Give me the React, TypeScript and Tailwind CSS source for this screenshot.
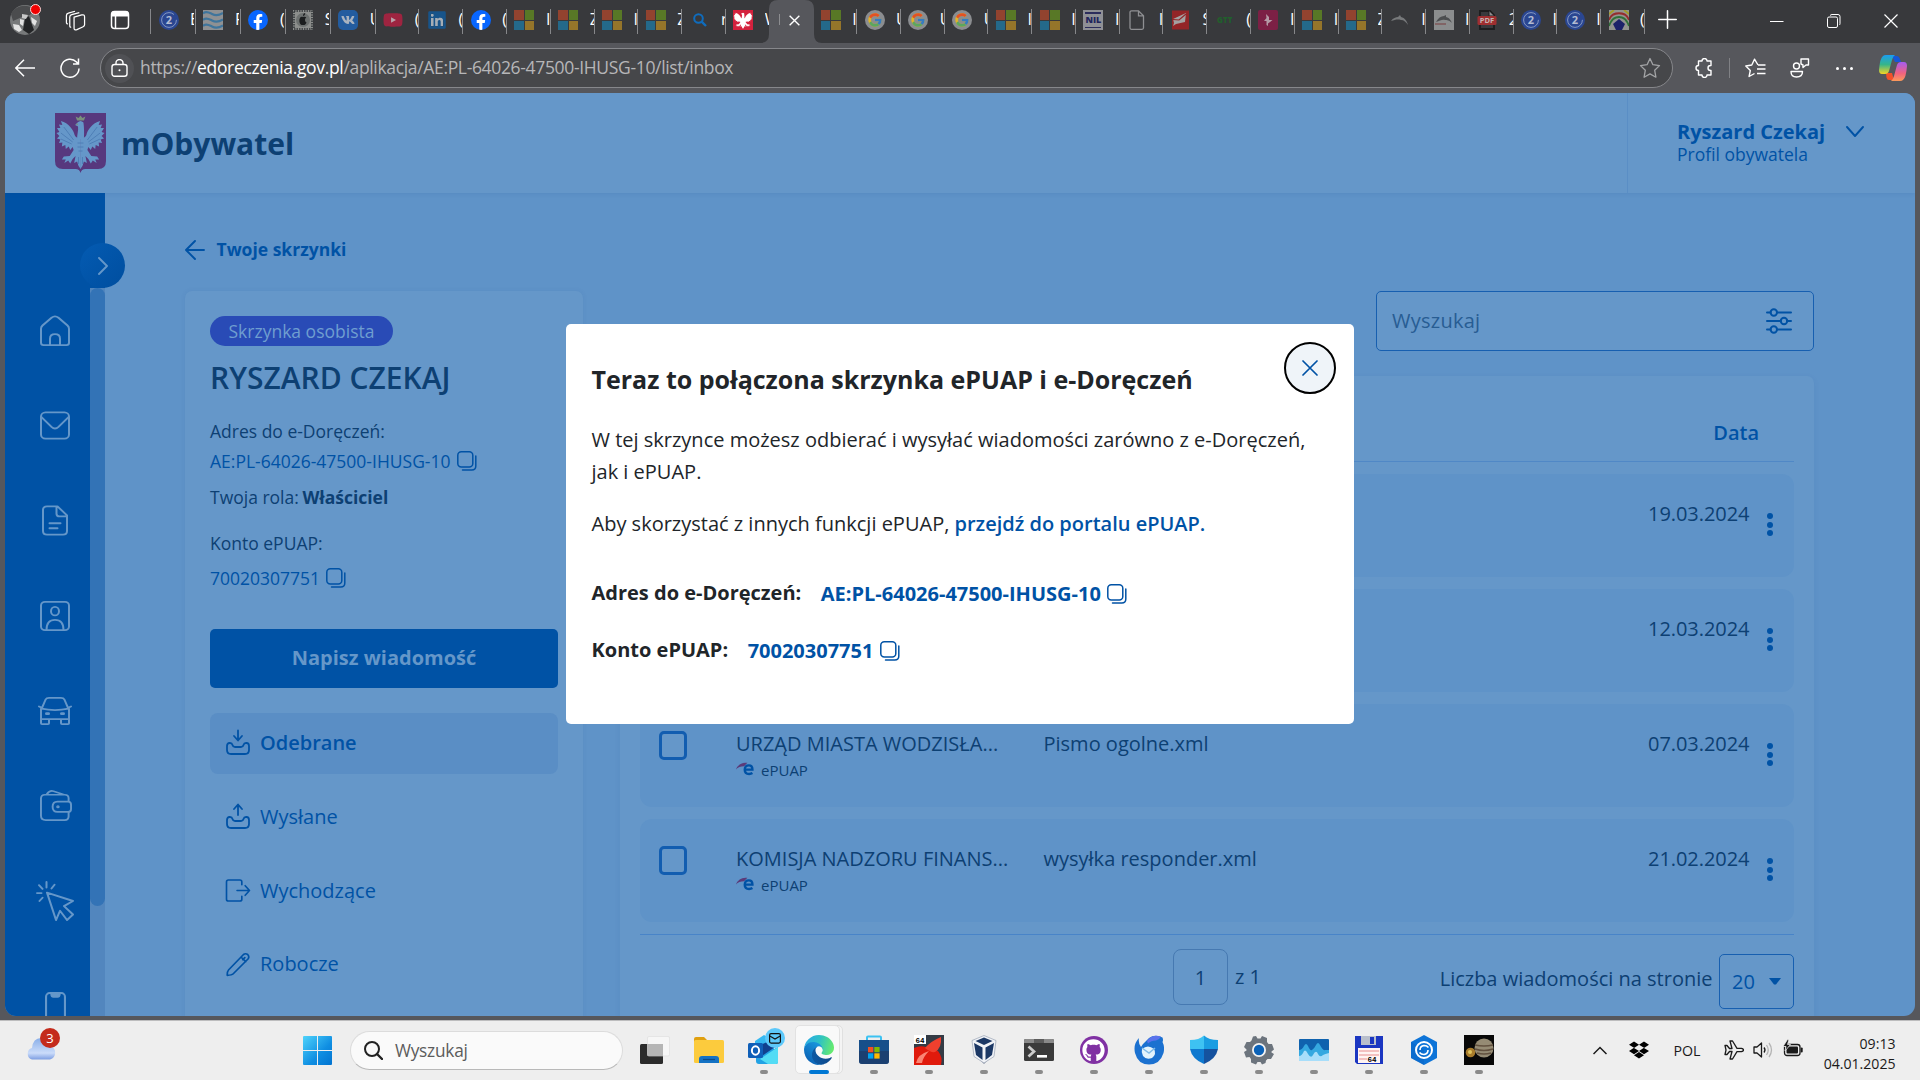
import React from "react";
import type { ReactNode } from "react";
import { FaVk, FaYoutube, FaLinkedin, FaGithub, FaDropbox, FaFacebookF } from "react-icons/fa";
import { FcGoogle } from "react-icons/fc";

/* ---------- favicons ---------- */

const MsLogo = () => (
  <div className="grid h-5 w-5 grid-cols-2 gap-[1px]">
    <div className="bg-[#92432f]" />
    <div className="bg-[#587826]" />
    <div className="bg-[#24698a]" />
    <div className="bg-[#95752a]" />
  </div>
);

const TwoCircle = () => (
  <svg viewBox="0 0 20 20" className="h-5 w-5">
    <circle cx="10" cy="10" r="10" fill="#2a4691" />
    <circle cx="10" cy="10" r="7.4" fill="none" stroke="#8fa0c8" strokeWidth="0.9" strokeDasharray="40 6" />
    <text x="10" y="14" textAnchor="middle" fontSize="11" fontWeight="700" fill="#b4bcd2" fontFamily="Open Sans, sans-serif">2</text>
  </svg>
);

const Facebook = () => (
  <div className="flex h-5 w-5 items-end justify-center overflow-hidden rounded-full bg-[#0866ff]">
    <FaFacebookF className="h-4 w-4 text-white" />
  </div>
);

const wing = "M26.200 22C25 25 22 26 20 22 19 17 14 10 6 8l1.500 4L4 11.500 5.500 15 2 15l2.500 4L1.500 20 4.500 23 2 25.500l3.500 1L4 30l3.500-.500L7 33.500l3.500-1.500.500 4 3-2.500L15.500 37l2.500-3 1 3-4 6-6 .500L7 46.500h4L9.500 50l4-2.500 2 3L18 46l3-3-1.500 7 3-1.500L24 53l2.200 3z";

const Eagle = ({ fill }: { fill: string }) => (
  <g fill={fill}>
    <path d={wing} />
    <path d={wing} transform="translate(52 0) scale(-1 1)" />
    <path d="M22.500 26c0-5 1.500-8 1-12.500L20.500 12l2.500-2.500q3-3 6 0Q30 16 29.500 26z" />
  </g>
);

const favicons: Record<string, ReactNode> = {
  ms: <MsLogo />,
  two: <TwoCircle />,
  fb: <Facebook />,
  waves: (
    <svg viewBox="0 0 20 20" className="h-5 w-5">
      <rect width="20" height="20" fill="#8f9193" />
      {[3.5, 10, 16].map((y) => (
        <path key={y} d={`M0 ${y}c3-3 6-1 9 .5s6 2 11-1`} fill="none" stroke="#3f759c" strokeWidth="2.200" />
      ))}
    </svg>
  ),
  apple: (
    <svg viewBox="0 0 20 20" className="h-5 w-5">
      <rect width="20" height="20" fill="#8c8e8c" />
      <rect x="1" y="1" width="18" height="18" fill="none" stroke="#33373a" strokeWidth="1.600" strokeDasharray="1.500 1" />
      <circle cx="10" cy="10" r="7" fill="#6d7170" />
      <path d="M10 7c-4-2-5 6-1.500 8h3c1-.500 2-2 2-2.500-2-1-2-4-.200-5-1-1-2-1-3.300-.500zM10 6c0-2 1-3 2.200-3 0 2-1 3-2.200 3z" fill="#1b1d1e" />
    </svg>
  ),
  vk: (
    <div className="flex h-5 w-5 items-center justify-center rounded-[5px] bg-[#235c9f]">
      <FaVk className="h-3.5 w-3.5 text-[#a9b3c0]" />
    </div>
  ),
  yt: (
    <div className="relative flex h-5 w-5 items-center justify-center">
      <div className="absolute h-2 w-2 bg-[#b9a3aa]" />
      <FaYoutube className="relative h-5 w-5 text-[#9e2440]" />
    </div>
  ),
  li: (
    <div className="relative flex h-5 w-5 items-center justify-center">
      <div className="absolute h-3 w-3 bg-[#a5adb5]" />
      <FaLinkedin className="relative h-5 w-5 text-[#17548a]" />
    </div>
  ),
  search: (
    <svg viewBox="0 0 20 20" className="h-5 w-5" fill="none" stroke="#0f6cbd" strokeWidth="2">
      <circle cx="8.500" cy="8.500" r="4.300" />
      <path d="M11.600 11.600l4.400 4.400" strokeWidth="2.400" />
    </svg>
  ),
  pl: (
    <svg viewBox="0 0 52 60" className="h-5 w-5" preserveAspectRatio="none">
      <rect width="52" height="60" fill="#d4213d" />
      <Eagle fill="#fff" />
    </svg>
  ),
  google: (
    <div className="flex h-5 w-5 items-center justify-center rounded-full bg-[#8b8d90]">
      <FcGoogle className="h-[16px] w-[16px] opacity-75" />
    </div>
  ),
  nil: (
    <div className="flex h-5 w-5 flex-col items-center justify-between bg-[#8f9095] py-[2px]">
      <div className="h-[1.5px] w-4 bg-[#2c2d5c]" />
      <div className="text-[9px] leading-[10px] font-extrabold text-[#22245c]">NIL</div>
      <div className="h-[1.5px] w-4 bg-[#2c2d5c]" />
    </div>
  ),
  file: (
    <svg viewBox="0 0 20 20" className="h-5 w-5" fill="none" stroke="#8e8f92" strokeWidth="1.300">
      <path d="M4.500.800h7l5 5v12a1.500 1.500 0 0 1-1.500 1.500H4.500A1.500 1.500 0 0 1 3 17.800V2.300A1.500 1.500 0 0 1 4.500.800zM11.500.800v5h5" />
    </svg>
  ),
  mail: (
    <svg viewBox="0 0 20 20" className="h-5 w-5">
      <path d="M1 .5h17V19.500H1z" fill="#932527" />
      <path d="M2 9L15 3l-1 9-9 2-3 2 1-3z" fill="#a3a1a1" />
      <path d="M2 9.500l6 .5 7-6" stroke="#932527" strokeWidth="1.200" fill="none" />
    </svg>
  ),
  gtt: <div className="w-5 text-center text-[8px] leading-5 font-extrabold text-[#215f2c]">GTT</div>,
  pink: (
    <svg viewBox="0 0 20 20" className="h-5 w-5">
      <rect width="20" height="20" rx="2" fill="#7c2045" />
      <path d="M8 4l3 3v3h3.500L10 13.500V16l-1.500-1v-4H6L8.500 8z" fill="#b59aa6" />
    </svg>
  ),
  dolphin: (
    <svg viewBox="0 0 20 20" className="h-5 w-5">
      <path d="M1 11c2-3 5-4 7-4l2-2 1 2c4 1 6 4 7 8-2-3-4-5-7-5-4-1-6 0-10 1z" fill="#77797b" />
    </svg>
  ),
  dolphin2: (
    <svg viewBox="0 0 20 20" className="h-5 w-5">
      <rect width="20" height="20" fill="#8b8d8e" />
      <path d="M2 12c2-4 5-6 8-6l2-1v2c4 1 5 4 6 6-3-3-5-3-7-3-3-1-5 1-9 2z" fill="#4c4e50" />
      <path d="M1 14h11" stroke="#7c4a4a" strokeWidth="1.200" />
    </svg>
  ),
  pdf: (
    <svg viewBox="0 0 20 20" className="h-5 w-5">
      <path d="M3 1h10l4 4v14H3z" fill="none" stroke="#1c1d1e" strokeWidth="1.800" />
      <path d="M12 1v5h5" fill="#8d8e90" stroke="#1c1d1e" />
      <rect x="0.500" y="6" width="19" height="9" rx="1.500" fill="#9f2f30" />
      <text x="10" y="13.200" textAnchor="middle" fontSize="7.500" fontWeight="700" fill="#c4b3b3" fontFamily="Open Sans, sans-serif">PDF</text>
    </svg>
  ),
  rainbow: (
    <svg viewBox="0 0 20 20" className="h-5 w-5" fill="none" strokeWidth="1.800">
      <rect width="20" height="20" fill="#92948f" />
      <path d="M0 4l5-4M15 0l5 4" stroke="#a39b28" />
      <path d="M0 10C3 1 17 1 20 10" stroke="#962d2d" />
      <path d="M0 16C4 4 16 4 20 16" stroke="#2f7038" />
      <path d="M4 14l6-5 6 5-3 6H7z" fill="#1c2269" />
    </svg>
  ),
};

const tabs: [string, string][] = [
  ["two", "E"], ["waves", "F"], ["fb", "("], ["apple", "S"], ["vk", "U"],
  ["yt", "("], ["li", "("], ["fb", "("], ["ms", "I"], ["ms", "Z"], ["ms", "I"], ["ms", "Z"], ["search", "r"], ["pl", "W"],
  ["active", ""],
  ["ms", "I"], ["google", "U"], ["google", "U"], ["google", "U"], ["ms", "I"], ["ms", "I"], ["nil", "I"], ["file", "I"],
  ["mail", "S"], ["gtt", "("], ["pink", "I"], ["ms", "I"], ["ms", "Z"], ["dolphin", "I"], ["dolphin2", "I"], ["pdf", "2"],
  ["two", "I"], ["two", "I"], ["rainbow", "("],
];

const Line = ({ d, className, w = 1.5 }: { d: string; className: string; w?: number }) => (
  <svg viewBox="0 0 24 24" className={className} fill="none" stroke="currentColor" strokeWidth={w} strokeLinecap="round" strokeLinejoin="round">
    <path d={d} />
  </svg>
);

function TabStrip() {
  return (
    <div className="flex h-[43px] shrink-0 bg-[#38393c] text-white">
      <div className="flex w-[150px] shrink-0 items-start pt-[5px] pl-[10px]">
        <div className="relative h-[30px] w-[30px] shrink-0">
          <svg viewBox="0 0 30 30" className="h-[30px] w-[30px]">
            <circle cx="15" cy="15" r="15" fill="#77797a" />
            <path d="M1 9c4-8 15-11 23-5l-4 6-8 2-9 4z" fill="#4b4c4e" />
            <path d="M15 14l4-3 2 6 3 8-5 4-6-4z" fill="#232426" />
            <path d="M3 19l6 1 3 5-3 2-5-3zM21 12l6 4-2 5-3-3zM10 14l4 1-1 6-3-2z" fill="#e2e2e2" />
            <path d="M12 9l6 1-2 4-4-1z" fill="#c9c9c9" />
          </svg>
          <div className="absolute -top-[1px] right-[-1px] h-[11px] w-[11px] rounded-full border border-[#fbdada] bg-[#f00000]" />
        </div>
        <svg viewBox="0 0 22 22" className="mt-[5px] ml-[25px] h-[21px] w-[21px] shrink-0" fill="none" stroke="#fff" strokeWidth="1.300">
          <path d="M9.500 7.500l8-2.300q3-.700 3 2v8.300q0 1.500-1.500 2l-6.500 3q-3 1-3-1.500z" />
          <path d="M6.500 17.500q-1.500.300-1.500-1.500V6.800q0-2 2-2.500l8-2M3 14q-1.500 0-1.500-1.500V5.300q0-2 2-2.500l7-2" transform="translate(0 .5)" />
        </svg>
        <svg viewBox="0 0 20 20" className="mt-[5px] ml-[24px] h-[20px] w-[20px] shrink-0" fill="none" stroke="#fff" strokeWidth="1.500">
          <rect x="1.500" y="1.500" width="17" height="17" rx="3" />
          <path d="M2 4h16" strokeWidth="5" />
          <path d="M5.500 6v12" />
        </svg>
      </div>
      {tabs.map(([icon, letter], i) =>
        icon === "active" ? (
          <div key={i} className="relative flex w-[43.750px] shrink-0 justify-center">
            <svg viewBox="0 0 62 43" className="absolute top-0 -left-[9px] h-[43px] w-[62px]">
              <path d="M0 43q9 0 9-9V9q0-9 9-9h27q9 0 9 9v25q0 9 8 9z" fill="#56575c" />
            </svg>
            <div className="relative mt-[14px] mr-[9px] h-[11px] w-px bg-[#8c8d90]" />
            <svg viewBox="0 0 12 12" className="relative mt-[15px] mr-[1px] h-[11px] w-[11px]" stroke="#fff" strokeWidth="1.500">
              <path d="M.7.700l10.600 10.600M11.300.700L.7 11.300" />
            </svg>
          </div>
        ) : (
          <div key={i} className={`flex shrink-0 items-start overflow-hidden pt-[9px] ${i < 5 ? "w-[44.950px]" : "w-[43.780px]"}`}>
            <div className={`h-[25px] w-px shrink-0 ${i === 15 ? "bg-transparent" : "bg-[#86878a]"}`} />
            <div className="mt-[1px] ml-[7.500px] h-5 w-5 shrink-0">{favicons[icon]}</div>
            <div className="ml-[11.500px] w-[3.750px] shrink-0 overflow-hidden text-[16px] leading-[20px]">{letter}</div>
          </div>
        ),
      )}
      <div className="flex flex-1 items-start">
        <div className="mt-[9px] h-[25px] w-px bg-[#86878a]" />
        <Line d="M12 2v20M2 12h20" className="mt-[9px] ml-[12px] h-[21px] w-[21px]" w={1.7} />
        <svg viewBox="0 0 14 14" className="mt-[15px] ml-[92px] h-[14px] w-[14px]" stroke="#fff"><path d="M0 6.500h13.500" /></svg>
        <svg viewBox="0 0 14 14" className="mt-[14px] ml-[43px] h-[14px] w-[14px]" stroke="#fff" fill="none">
          <rect x=".5" y="3" width="10" height="10.500" rx="1.500" />
          <path d="M3 1.500q1-1 2-1h6q2 0 2 2v7q0 1-.7 1.500" />
        </svg>
        <svg viewBox="0 0 14 14" className="mt-[14px] ml-[43px] h-[14px] w-[14px]" stroke="#fff" strokeWidth="1.200"><path d="M.5.500l13 13M13.500.500l-13 13" /></svg>
      </div>
    </div>
  );
}

const starPath = "M12 2.500l2.900 6.200 6.600.900-4.800 4.700 1.200 6.900L12 17.900l-5.900 3.300 1.200-6.900L2.500 9.600l6.600-.900z";

function Toolbar() {
  return (
    <div className="flex h-[50px] shrink-0 items-center bg-[#56575c] text-white">
      <svg viewBox="0 0 20 18" className="ml-[15px] h-[18px] w-[20px]" fill="none" stroke="#fff" strokeWidth="1.500"><path d="M20 9H1M9 .800L.8 9 9 17.200" /></svg>
      <svg viewBox="0 0 20 20" className="ml-[25px] h-[20px] w-[20px]" fill="none" stroke="#fff" strokeWidth="1.500"><path d="M19 10.500A9 9 0 1 1 16.500 4l1.500 1.800M18.500.500V6H13" /></svg>
      <div className="ml-[20px] flex h-[40px] w-[1573px] items-center rounded-full border border-[#86878b] bg-[#46474a]">
        <div className="ml-[4px] flex h-[29px] w-[29px] items-center justify-center rounded-full bg-[#505155]">
          <svg viewBox="0 0 17 18" className="h-[18px] w-[17px]" fill="none" stroke="#fff" strokeWidth="1.400">
            <rect x="1" y="5.500" width="15" height="11.700" rx="2.500" />
            <path d="M5 5.500V4a3.500 3.500 0 0 1 7 0v1.500" />
            <circle cx="8.500" cy="11.300" r="1" fill="#fff" stroke="none" />
          </svg>
        </div>
        <div className="-mt-[2px] ml-[6px] text-[17.500px] tracking-[-0.335px] whitespace-nowrap text-[#b6b6b8]">
          https://<span className="text-white">edoreczenia.gov.pl</span>/aplikacja/AE:PL-64026-47500-IHUSG-10/list/inbox
        </div>
        <div className="flex-1" />
        <Line d={starPath} className="mr-[10px] h-[24px] w-[24px] text-[#a3a4a6]" w={1.3} />
      </div>
      <svg viewBox="0 0 20 20" className="ml-[21px] h-[20px] w-[20px]" fill="none" stroke="#fff" strokeWidth="1.400" strokeLinejoin="round">
        <path d="M4.500 3H8a2.500 2.500 0 0 1 5 0h4v4.500h-.5a2.500 2.500 0 0 0 0 5h.5V17h-4a2.500 2.500 0 0 1-5 0H4.500v-4.500a2.500 2.500 0 0 1 0-5z" />
      </svg>
      <div className="ml-[15px] h-[20px] w-px bg-[#808185]" />
      <svg viewBox="0 0 21 20" className="ml-[15px] h-[20px] w-[21px]" fill="none" stroke="#fff" strokeWidth="1.400" strokeLinejoin="round">
        <path d="M13 7L9.500 1.200 6.800 7 .8 8l4.500 4.500-1.200 6L9.500 15.500M13 7h7.500M12 11h8.500M12 15.500h8.500" />
      </svg>
      <svg viewBox="0 0 20 20" className="ml-[24px] h-[20px] w-[20px]" fill="none" stroke="#fff" strokeWidth="1.400" strokeLinejoin="round">
        <circle cx="6.500" cy="8" r="3" />
        <path d="M1 13.500h11.500c0 3.500-2 5.500-6 5.500S1 17 1 13.500zM11 1h7.500v6H16l-3 2.500V7l-2-1z" />
      </svg>
      <div className="ml-[26px] flex gap-[4px]">
        {[0, 1, 2].map((i) => <div key={i} className="h-[3px] w-[3px] rounded-full bg-white" />)}
      </div>
      <svg viewBox="0 0 28 26" className="ml-[26px] h-[26px] w-[28px]">
        <defs>
          <linearGradient id="cpA" x1="0" y1="0" x2="0" y2="1"><stop offset="0" stopColor="#1b9df0" /><stop offset=".5" stopColor="#35b58a" /><stop offset="1" stopColor="#f5d524" /></linearGradient>
          <linearGradient id="cpB" x1="0" y1="0" x2="0" y2="1"><stop offset="0" stopColor="#a45cf2" /><stop offset=".6" stopColor="#f2637e" /><stop offset="1" stopColor="#fb9a5a" /></linearGradient>
        </defs>
        <path d="M13 1h5q2 0 2.700 2.500L22 7h-6z" fill="#1657d8" />
        <path d="M15 25h-5q-2 0-2.500-2.500L7 18h6z" fill="#f2512a" />
        <path d="M7 0h9q-2 1-3 5l-3 11q-1 3-4 3H3q-3 0-3-4Q1 3 4 1 5 0 7 0z" fill="url(#cpA)" />
        <path d="M21 26h-9q2-1 3-5l3-11q1-3 4-3h3q3 0 3 4-1 12-4 14-1 1-3 1z" fill="url(#cpB)" />
      </svg>
    </div>
  );
}

/* ---------- page ---------- */

const CopyIcon = () => (
  <svg viewBox="0 0 20 20" className="h-5 w-5" fill="none" stroke="#0052a5" strokeWidth="1.500" strokeLinecap="round">
    <rect x=".8" y=".8" width="15" height="15.200" rx="3.500" />
    <path d="M18.800 5v10q0 4-4 4H5.500" />
  </svg>
);

function Header() {
  return (
    <div className="relative z-10 flex h-[100px] shrink-0 bg-[#6597c9] shadow-[0_1px_4px_rgba(0,60,130,0.1)]">
      <svg viewBox="0 0 52 60" className="mt-[20px] ml-[50px] h-[60px] w-[51px]" preserveAspectRatio="none">
        <path d="M0 0h52v48q0 8-8 8H31q-4 0-5 4-1-4-5-4H8q-8 0-8-8z" fill="#57387e" />
        <Eagle fill="#6597c9" />
        <path d="M22.500 7.500l-1.500-4 3 1.500L26 2.500l2 2.500 3-1.500-1.500 4zM21 11l2.500-.5-.5 2z" fill="#7a8f7c" />
        <path d="M9 14l10 13M6 20l12 9M6 26l11 5M43 14L33 27M46 20l-12 9M46 26l-11 5M23 30l6 0M23 34l6 0M24 38l4 0M24 44v7M28 44v7" stroke="#4b7cb4" strokeWidth=".9" fill="none" />
      </svg>
      <div className="mt-[30px] ml-[15px] text-[30px] leading-[41px] font-bold text-[#0d4073]">mObywatel</div>
      <div className="flex-1" />
      <div className="flex w-[288px] border-l border-[#5a8ec5] pt-[25px] pl-[49px] text-[#0052a5]">
        <div className="w-[149px] whitespace-nowrap">
          <div className="text-[20px] leading-[27px] font-bold">Ryszard Czekaj</div>
          <div className="-mt-[1px] text-[17.500px] leading-[21px]">Profil obywatela</div>
        </div>
        <svg viewBox="0 0 18 11" className="mt-[8px] ml-[20px] h-[11px] w-[18px]" fill="none" stroke="currentColor" strokeWidth="1.900" strokeLinecap="round" strokeLinejoin="round"><path d="M1 1l8 9 8-9" /></svg>
      </div>
    </div>
  );
}

const sideIcons: { box: string; cls: string; body: ReactNode }[] = [
  { box: "0 0 30 34", cls: "h-[31px] w-[30px]", body: <path d="M1 15Q1 13 2.500 11.500L11.500 3q3.500-3 7 0L27.500 11.500Q29 13 29 15v15.500q0 2.500-2.500 2.500H3.500Q1 33 1 30.500zM10 33v-7q0-5 5-5t5 5v7" /> },
  { box: "0 0 30 31", cls: "h-[29px] w-[30px]", body: <><rect x="1" y="1.500" width="28" height="28" rx="4.500" /><path d="M1.500 6.500l10 10.500q3.500 3.500 7 0l10-10.500" /></> },
  { box: "0 0 26 34", cls: "h-[31px] w-[26px]", body: <path d="M5 1.500h10.500l9.500 10V28.500q0 4-4 4H5q-4 0-4-4v-23q0-4 4-4zM14.500 2v7.500q0 3 3 3H25M7.500 20h11M7.500 25.500h8" /> },
  { box: "0 0 30 34", cls: "h-[30px] w-[30px]", body: <><rect x="1" y="1" width="28" height="32" rx="4" /><ellipse cx="15" cy="11.500" rx="4" ry="4.800" /><path d="M6.500 33q0-11.500 8.500-11.500t8.500 11.500" /></> },
  { box: "0 0 34 31", cls: "h-[28px] w-[34px]", body: <><path d="M4 12l3.500-9Q8.500 1 11 1h12q2.500 0 3.500 2l3.500 9M3 13v16q0 1 1 1h6q1 0 1-1v-4M31 13v16q0 1-1 1h-6q-1 0-1-1v-4M3 24.500h28M3.500 13q13.500 3 27 0M1 10.500l3 1.500M33 10.500L30 12" /><path d="M8.500 18.500h2M23.500 18.500h2" strokeWidth="3" /></> },
  { box: "0 0 33 36", cls: "ml-[2px] h-[31px] w-[32px]", body: <><path d="M29.500 13.500V9.500q0-4-4-4H5q-4 0-4 4.500v20q0 5 5 5h19.500q4 0 4-4.500v-4M7 5Q10 0 14 1.500L25 5.500M18 13.500h11q3 0 3 3.500v5q0 3.500-3 3.500H18q-5 0-5-6T18 13.500z" /><circle cx="18.500" cy="19.500" r=".8" /></> },
  { box: "0 0 38 43", cls: "h-[40px] w-[38px]", body: <path d="M11 12.500l26 9-9 5.500 9 9-6 6-7-10-4 10zM10.500 1v6M18.500 4L15.500 8M3 4.500l3.500 4M1 13h4.500M3.500 21.500l3-3.500" /> },
  { box: "0 0 20 36", cls: "mt-[30px] h-[38px] w-[21px]", body: <><rect x="1" y="1" width="18" height="34" rx="3.500" /><path d="M6 1.500q0 3 2 3h4q2 0 2-3" fill="#6597c9" /><path d="M9 26.500h2" /></> },
];

function Sidebar() {
  return (
    <div className="relative flex w-[100px] shrink-0 bg-[#0052a5]">
      <div className="flex h-[823px] w-[85px] flex-col overflow-hidden pt-[90px] pl-[15px] text-[#6597c9]">
        {sideIcons.map((ic, i) => (
          <div key={i} className="flex h-[95px] shrink-0 items-center justify-center">
            <svg viewBox={ic.box} className={ic.cls} fill="none" stroke="currentColor" strokeWidth="2" strokeLinecap="round" strokeLinejoin="round" preserveAspectRatio="none">{ic.body}</svg>
          </div>
        ))}
      </div>
      <div className="mt-[95px] w-[15px] bg-[#5286be]">
        <div className="h-[618px] rounded-full bg-[#3373b6]" />
      </div>
      <div className="absolute top-[50px] left-[75px] flex h-[45px] w-[45px] items-center justify-center rounded-full bg-linear-to-br from-[#045bb2] to-[#004e9f]">
        <svg viewBox="0 0 10 18" className="h-[18px] w-[10px]" fill="none" stroke="#6597c9" strokeWidth="1.900" strokeLinecap="round" strokeLinejoin="round"><path d="M1 1l8 8-8 8" /></svg>
      </div>
    </div>
  );
}

const Tray = ({ up }: { up?: boolean }) => (
  <svg viewBox="0 0 24 28" className="h-[28px] w-[24px]" fill="none" stroke="#0052a5" strokeWidth="1.800" strokeLinecap="round" strokeLinejoin="round">
    <path d="M4 14H3.500Q1 14 1 17v4q0 4 4 4h14q4 0 4-4v-4q0-3-2.500-3H20q-2 0-2.500 2t-2.500 2H9q-2 0-2.500-2T4 14z" />
    <path d={up ? "M12 12V2M8 6l4-4.500L16 6" : "M12 1.500V11M8 7l4 4.500L16 7"} />
  </svg>
);

const folders: { label: string; icon: ReactNode }[] = [
  { label: "Odebrane", icon: <Tray /> },
  { label: "Wysłane", icon: <Tray up /> },
  { label: "Wychodzące", icon: <svg viewBox="0 0 26 24" className="h-[23px] w-[26px]" fill="none" stroke="#0052a5" strokeWidth="1.700" strokeLinecap="round" strokeLinejoin="round"><path d="M17 6V3q0-2-2-2H3Q1 1 1 3v18q0 2 2 2h12q2 0 2-2v-3M12 12h13M20.500 7l4.500 5-4.500 5" /></svg> },
  { label: "Robocze", icon: <svg viewBox="0 0 24 24" className="h-[25px] w-[24px]" fill="none" stroke="#0052a5" strokeWidth="1.700" strokeLinecap="round" strokeLinejoin="round"><path d="M2.500 17.500L17.500 2q2-1.500 4.200 0 2 2.200.300 4.500L7 21.500q-1 1-5.800 1.300 0-4 1.300-5.300zM15 4.500l4.700 4.700M18.800 5.200L16.800 7.200" /></svg> },
];

function MailboxCard() {
  return (
    <div className="flex h-[760px] w-[398px] shrink-0 flex-col rounded-t-[7px] bg-[#6597c9] px-[25px] pt-[25px] text-[17.500px] leading-[30px] whitespace-nowrap text-[#0d4073] shadow-[0_0_5px_rgba(0,60,140,0.08)]">
      <div className="h-[30px] self-start rounded-full bg-[#294bb6] px-[18.500px] leading-[30px] text-[#6f9ed0]">Skrzynka osobista</div>
      <div className="mt-[12px] text-[30px] leading-[40px] font-semibold">RYSZARD CZEKAJ</div>
      <div className="mt-[18px]">Adres do e-Doręczeń:</div>
      <div className="flex items-center gap-[6px] text-[#0052a5]">AE:PL-64026-47500-IHUSG-10 <CopyIcon /></div>
      <div className="mt-[6px]">Twoja rola: <span className="-ml-[1px] font-bold">Właściciel</span></div>
      <div className="mt-[16px]">Konto ePUAP:</div>
      <div className="mt-[5px] flex items-center gap-[6px] text-[#0052a5]">70020307751 <CopyIcon /></div>
      <div className="mt-[36px] flex h-[59px] shrink-0 items-center justify-center rounded-[5px] bg-[#0052a5] pb-[2px] text-[20px] font-bold text-[#6597c9]">Napisz wiadomość</div>
      <div className="mt-[25px] flex flex-col gap-[12.800px] text-[20px] text-[#0052a5]">
        {folders.map((f, i) => (
          <div key={f.label} className={`flex h-[61px] items-center rounded-[8px] pb-[1px] pl-[15px] ${i === 0 ? "bg-[#5a8ec5] font-semibold" : ""}`}>
            <div className="mr-[9px] flex w-[26px] justify-center">{f.icon}</div>
            {f.label}
          </div>
        ))}
      </div>
    </div>
  );
}

const rows = [
  { from: "", subject: "", date: "19.03.2024" },
  { from: "", subject: "", date: "12.03.2024" },
  { from: "URZĄD MIASTA WODZISŁA...", subject: "Pismo ogolne.xml", date: "07.03.2024" },
  { from: "KOMISJA NADZORU FINANS...", subject: "wysyłka responder.xml", date: "21.02.2024" },
];

function Messages() {
  return (
    <div className="flex w-[1194px] flex-col">
      <div className="flex h-[60px] w-[438px] shrink-0 items-center self-end rounded-[5px] border border-[#175fb0] bg-[#6597c9] pl-[15px]">
        <div className="pb-[1px] text-[20px] tracking-[0.250px] text-[#285d93]">Wyszukaj</div>
        <svg viewBox="0 0 26 26" className="mr-[21.500px] ml-auto h-[26px] w-[26px]" fill="none" stroke="#0052a5" strokeWidth="2" strokeLinecap="round">
          <path d="M1 4.500h3.500M11 4.500h14M1 13h14M21 13h4M1 21.500h3.500M11 21.500h14" />
          <circle cx="7.800" cy="4.500" r="3.200" /><circle cx="18" cy="13" r="3.200" /><circle cx="7.800" cy="21.500" r="3.200" />
        </svg>
      </div>
      <div className="mt-[25px] flex h-[675px] shrink-0 flex-col rounded-t-[7px] bg-[#6597c9] pt-[42px] pr-[20px] pl-[20px] text-[20px] leading-[30px] whitespace-nowrap text-[#0d4073] shadow-[0_2px_6px_rgba(0,60,140,0.08)]">
        <div className="border-b border-[#5088c6] pr-[35px] pb-[13px] text-right font-semibold text-[#0052a5]">Data</div>
        <div className="mt-[12px] flex flex-col gap-[12px]">
          {rows.map((r) => (
            <div key={r.date} className="flex h-[103px] items-start rounded-[12px] bg-[#5f93c8] pl-[19px]">
              <div className="mt-[27px] h-[29px] w-[28px] rounded-[5px] border-3 border-[#125db0] bg-[#6597c9]" />
              <div className="mt-[25px] ml-[49px] w-[307.500px]">
                <div>{r.from}</div>
                {r.from && (
                  <div className="mt-[1px] flex items-center text-[15px] leading-[20px]">
                    <svg viewBox="0 0 20 14" className="mt-[2px] mr-[6px] h-[14px] w-[19px] self-start">
                      <path d="M0 7.500Q3-.5 12 .5L8.500 4Q3 4 0 7.500z" fill="#5b3a79" />
                      <path d="M10 7.600H17.300Q17.300 3.200 13.500 3.200 9.200 3.200 9.200 7.800 9.200 12.300 13.800 12.300 15.800 12.300 17.300 11.300" fill="none" stroke="#0052a5" strokeWidth="2.500" />
                    </svg>
                    ePUAP
                  </div>
                )}
              </div>
              <div className="mt-[25px]">{r.subject}</div>
              <div className="mt-[25px] ml-auto tracking-[-0.050px]">{r.date}</div>
              <div className="mt-[39px] mr-[21px] ml-[17.500px] flex flex-col gap-[2.500px]">
                {[0, 1, 2].map((i) => <div key={i} className="h-[6px] w-[6px] rounded-full bg-[#0052a5]" />)}
              </div>
            </div>
          ))}
        </div>
        <div className="mt-[12px] flex items-start border-t border-[#4884c8]">
          <div className="mt-[14px] ml-[533px] h-[56px] w-[55px] rounded-[8px] border border-[#4679b1] pt-[13px] text-center">1</div>
          <div className="mt-[27px] ml-[7px]">z 1</div>
          <div className="mt-[29px] mr-[6.500px] ml-auto">Liczba wiadomości na stronie</div>
          <div className="mt-[19px] flex h-[55px] w-[75px] items-center rounded-[5px] border border-[#175fb0] pl-[12px] text-[#0052a5]">
            20
            <svg viewBox="0 0 12 7" className="ml-[14px] h-[7px] w-[12px]"><path d="M0 0h12L7 6.500H5z" fill="#0052a5" /></svg>
          </div>
        </div>
      </div>
    </div>
  );
}

function Dialog() {
  return (
    <div className="absolute inset-0 z-20 flex items-start justify-center pt-[231px]">
      <div className="relative h-[400px] w-[788px] rounded-[5px] bg-white px-[25.500px] pt-[38px] text-[20px] leading-[32px] text-[#212529]">
        <h2 className="text-[25px] leading-[34px] font-bold">Teraz to połączona skrzynka ePUAP i e-Doręczeń</h2>
        <p className="mt-[28px] mr-[-10px]">W tej skrzynce możesz odbierać i wysyłać wiadomości zarówno z e-Doręczeń,<br />jak i ePUAP.</p>
        <p className="mt-[20px]">Aby skorzystać z innych funkcji ePUAP, <span className="font-semibold text-[#0052a5]">przejdź do portalu ePUAP.</span></p>
        <div className="mt-[38px] flex items-center font-bold">
          <span className="-mt-[2px]">Adres do e-Doręczeń:</span>
          <span className="mr-[6px] ml-[19.500px] text-[#0052a5]">AE:PL-64026-47500-IHUSG-10</span>
          <CopyIcon />
        </div>
        <div className="mt-[25px] flex items-center font-bold">
          <span className="-mt-[2px]">Konto ePUAP:</span>
          <span className="mr-[7px] ml-[19.500px] text-[#0052a5]">70020307751</span>
          <CopyIcon />
        </div>
        <button className="absolute top-[18px] right-[18px] flex h-[52px] w-[52px] items-center justify-center rounded-full border-2 border-black bg-[#eff4f9]">
          <svg viewBox="0 0 16 16" className="h-4 w-4" stroke="#0052a5" strokeWidth="1.700" strokeLinecap="round"><path d="M1 1l14 14M15 1L1 15" /></svg>
        </button>
      </div>
    </div>
  );
}

/* ---------- taskbar ---------- */

const EdgeLogo = () => (
  <svg viewBox="0 0 256 256" className="h-[30px] w-[30px]">
    <defs>
      <linearGradient id="e1" x1="0" y1="0" x2="1" y2="0"><stop offset="0" stopColor="#0c59a4" /><stop offset="1" stopColor="#114a8b" /></linearGradient>
      <linearGradient id="e2" x1=".8" y1="0" x2=".2" y2="1"><stop offset="0" stopColor="#1b9de2" /><stop offset="1" stopColor="#0a5cb0" /></linearGradient>
      <linearGradient id="e3" x1="0" y1=".3" x2="1" y2=".5"><stop offset="0" stopColor="#2aa9e8" /><stop offset=".5" stopColor="#2fc2c4" /><stop offset="1" stopColor="#66eb6e" /></linearGradient>
    </defs>
    <path fill="url(#e1)" d="M231.070 190.500c-3.400 1.800-6.900 3.300-10.400 4.700a101 101 0 0 1-35.500 6.400c-46.800 0-87.500-32.200-87.500-73.500a31.500 31.500 0 0 1 16.300-27c-42.300 1.800-53.200 45.900-53.200 71.700 0 73 67.300 80.400 81.800 80.400 7.800 0 19.600-2.300 26.700-4.500l1.300-.4a128 128 0 0 0 66.600-52.800 4 4 0 0 0-6.100-5z" />
    <path fill="url(#e2)" d="M105.700 241.400a79 79 0 0 1-22.700-21.300 80.700 80.700 0 0 1 29.500-120.800c3.100-1.500 8.500-4.100 15.500-4a32.400 32.400 0 0 1 25.700 13 32 32 0 0 1 6.400 18.700c0-.2 24.500-79.600-80-79.600-43.900 0-80 41.700-80 78.200a130 130 0 0 0 12.100 56 128 128 0 0 0 156.400 67.100 75.500 75.500 0 0 1-62.900-7.300z" />
    <path fill="url(#e3)" d="M152.300 148.900c-.8 1-3.300 2.500-3.300 5.600 0 2.600 1.700 5.100 4.700 7.200 14.400 10 41.500 8.700 41.600 8.700a59.600 59.600 0 0 0 30.300-8.400A61.400 61.400 0 0 0 256 109.200c.3-22.400-8-37.300-11.300-43.900C223.500 23.800 177.700 0 128 0A128 128 0 0 0 0 126.200c.5-36.500 36.800-66 80-66 3.500 0 23.500.3 42 10 16.300 8.600 24.900 19 30.900 29.200 6.100 10.700 7.200 24.200 7.200 29.500s-2.700 13.300-7.800 20z" />
  </svg>
);

const svg30 = "h-[30px] w-[30px]";

const apps: { name: string; icon: ReactNode; open: boolean }[] = [
  { name: "desktops", open: false, icon: <svg viewBox="0 0 30 30" className="ml-[3px] h-[30px] w-[30px]"><rect x="0" y="9" width="23" height="20" rx="1.500" fill="#2b2b2b" /><rect x="7.500" y="1.500" width="22" height="19.500" rx="1.500" fill="#f6f6f6" stroke="#dcdcdc" strokeWidth=".6" /><rect x="7.500" y="9" width="15.500" height="12" fill="#b5b5b5" /></svg> },
  { name: "explorer", open: false, icon: <svg viewBox="0 0 30 30" className={svg30}><path d="M0 4q0-2 2-2h8l3 3v5H0z" fill="#e0a010" /><rect y="5" width="30" height="23" rx="1.500" fill="#fccb3d" /><path d="M5 28v-4q0-3 3-3h14q3 0 3 3v4z" fill="#1472c4" /><path d="M9 24.500h12" stroke="#0c4a88" strokeWidth="1.200" /></svg> },
  { name: "outlook", open: true, icon: <svg viewBox="0 0 32 30" className="h-[30px] w-[32px]"><path d="M7 6L16 0l10 6v8H7z" fill="#35b8f1" /><path d="M8 8l18 6 4-2v15q0 2-2 2H11q-3 0-3-3z" fill="#22a2e4" /><path d="M30 12L12 24l8 5h8q2 0 2-2z" fill="#53dcf5" /><path d="M12 10l14-6 1 8-13 9z" fill="#11408f" /><rect x="0" y="8" width="15" height="15" rx="1.500" fill="#0f5fb8" /><ellipse cx="7.500" cy="15.500" rx="3.600" ry="4.200" fill="none" stroke="#fff" strokeWidth="2" /></svg> },
  { name: "edge", open: true, icon: <EdgeLogo /> },
  { name: "store", open: true, icon: <svg viewBox="0 0 30 30" className={svg30}><path d="M8 6V2.500Q8 1.500 9 1.500h12q1 0 1 1V6" fill="none" stroke="#3cc2f2" strokeWidth="2" /><path d="M0 5h30v21q0 3-3 3H3q-3 0-3-3z" fill="#174f8a" /><path d="M0 16h30v10q0 3-3 3H3q-3 0-3-3z" fill="#1e3a66" fillOpacity=".7" /><rect x="9" y="12" width="5.300" height="5.300" fill="#f25022" /><rect x="15.300" y="12" width="5.300" height="5.300" fill="#7fba00" /><rect x="9" y="18.300" width="5.300" height="5.300" fill="#00a4ef" /><rect x="15.300" y="18.300" width="5.300" height="5.300" fill="#ffb900" /></svg> },
  { name: "irfan", open: true, icon: <svg viewBox="0 0 30 30" className={svg30}><rect width="30" height="30" fill="#343b45" /><path d="M0 13q6-3 12-1l12 4q5 6 3 14H0z" fill="#e01a0c" /><path d="M11 13q6-7 16-11 1 11-6 15-4 1-10-4z" fill="#f0402e" /><path d="M2 28q2-9 13-12-6 6-7 12z" fill="#fa8573" /><rect width="12" height="9" fill="#fff" /><text x="6" y="7.500" textAnchor="middle" fontSize="7.500" fontWeight="700" fontFamily="Liberation Mono, monospace">64</text></svg> },
  { name: "virtualbox", open: true, icon: <svg viewBox="0 0 30 30" className={svg30}><path d="M6 20l9 9 9-9-9 3z" fill="#8b93a3" /><path d="M15 .5l12 5-2 16-10 6.500-10-6.500L3 5.500z" fill="#f1f3f7" stroke="#9aa3b5" strokeWidth=".7" /><path d="M15 2.500L23.500 6 15 10 6.500 6zM5 8l8.500 4.500V25l-6.500-5zM25 8l-8.500 4.500V25l6.500-5z" fill="#1c3865" /></svg> },
  { name: "terminal", open: true, icon: <svg viewBox="0 0 30 30" className={svg30}><rect y="4" width="30" height="22" rx="1.500" fill="#3a3a3a" /><path d="M0 8V5.500Q0 4 1.500 4h27Q30 4 30 5.500V8z" fill="#8a8a8a" /><path d="M10 4h10v4H10z" fill="#5c5c5c" /><path d="M4.500 11.500l5.500 5-5.500 5" fill="none" stroke="#ccc" strokeWidth="2.700" /><rect x="13" y="20" width="10" height="2.600" fill="#fff" /></svg> },
  { name: "github", open: true, icon: <div className="flex h-[28px] w-[28px] items-center justify-center rounded-full bg-[#8031a3]"><FaGithub className="h-[23px] w-[23px] text-white" /></div> },
  { name: "thunderbird", open: true, icon: <svg viewBox="0 0 30 30" className={svg30}><path d="M5 3Q-1 9 1 18q3 11.500 14 11.500T29.500 18q1.500-6-1-11 1-2 0-4.500Q21-1 15 3l-6 6-2 3Q4 8 5 3z" fill="#1b71d0" /><path d="M13 6q5-7 14-4.500-1 2.500-5 4-5 0-8 3z" fill="#5b73ec" /><path d="M8 14q6-5 12 0 3 5-2 9-6 2-9-2-2-4-1-7z" fill="#e3f3fc" /><path d="M8 13l7 5 6-5" stroke="#83bce8" strokeWidth="1.500" fill="none" /></svg> },
  { name: "defender", open: true, icon: <svg viewBox="0 0 30 30" className={svg30}><path d="M15 .5q5 4.500 14 4.500v9H15z" fill="#1a9de2" /><path d="M15 .5Q10 5 1 5v9h14z" fill="#3ec2f2" /><path d="M1 14h14v15Q3 24 1 14z" fill="#0f79cf" /><path d="M29 14H15v15q12-5 14-15z" fill="#15529f" /></svg> },
  { name: "settings", open: true, icon: <svg viewBox="0 0 30 30" className={svg30}><path d="M9 1.500l3-.5 1.500 2.500h3L18 1l5 2v4l1.500 2H28l2 5.500-2.500 2v1L30 19l-3 5h-3.500L22 25.500 21.500 28 18 29.500 16.500 27h-3L12 29.500 7 27.500V24l-1.500-2L2 22.500 0 17l2.500-1.500v-1L0 12l2.500-5L6 7l1.500-1.500z" fill="#6c747d" /><circle cx="15" cy="15" r="7" fill="#f3f3f3" /><circle cx="15" cy="15" r="5.200" fill="#0b62b8" /></svg> },
  { name: "monitor", open: true, icon: <svg viewBox="0 0 30 30" className={svg30}><rect y="4" width="30" height="22" rx="1" fill="#0f62ae" /><path d="M0 15q3 0 5-4t4 0q2 5 4 4t4-5q2-4 4 0 3 6 5 5h4v11H0z" fill="#35a8e0" /><path d="M0 26v-5q3 0 5-5 2-2 4 3 3 5 5 1 3-6 5-1 2 4 5 1 2-1 6-2v8z" fill="#a8defa" /></svg> },
  { name: "totalcmd", open: true, icon: <svg viewBox="0 0 30 30" className={svg30}><path d="M1 1h28v28H3l-2-2z" fill="#1b36c1" /><rect x="7" y="1" width="15" height="9" fill="#b9bfcc" /><rect x="16" y="2" width="4" height="7" fill="#1b36c1" /><rect x="4" y="13" width="22" height="15" fill="#fff4f2" /><path d="M5 16h20M5 20h20M5 24h8" stroke="#f0b0b0" strokeWidth="1.500" /><text x="18" y="27" textAnchor="middle" fontSize="7.500" fontWeight="700" fontFamily="Liberation Mono, monospace">64</text></svg> },
  { name: "sync", open: true, icon: <svg viewBox="0 0 30 30" className={svg30}><path d="M15 0l13 7v16l-13 7-13-7V7z" fill="#0d74d8" /><path d="M15 15V30L2 23V7z" fill="#0a64c4" fillOpacity=".5" /><circle cx="15" cy="15" r="8" fill="none" stroke="#fff" strokeWidth="2" /><path d="M11 15q0-4 4-4.500 3 0 4.500 2M19 15q0 4-4 4.500-3 0-4.500-2" fill="none" stroke="#fff" strokeWidth="1.600" /></svg> },
  { name: "stellarium", open: true, icon: <svg viewBox="0 0 30 30" className={svg30}><rect width="30" height="30" fill="#080808" /><circle cx="20" cy="13" r="9.500" fill="#958b74" /><path d="M11 10q9 2 18 0M11 14q9 3 18 0M13 18q7 2 14 0" stroke="#62513f" strokeWidth="1.700" fill="none" /><circle cx="6.500" cy="17.500" r="4.800" fill="#a97c2b" /><circle cx="6" cy="17" r="2" fill="#dfc35d" /></svg> },
];

function Taskbar() {
  return (
    <div className="flex h-[60px] shrink-0 border-t border-[#bdbdbe] bg-[#eeeeee] text-[#1a1a1a]">
      <div className="relative mt-[13px] ml-[26px] h-[26px] w-[30px]">
        <svg viewBox="0 0 30 26" className="h-[26px] w-[30px]">
          <defs><linearGradient id="cl" x1="0" y1="0" x2="0" y2="1"><stop offset="0" stopColor="#89aee8" /><stop offset=".7" stopColor="#cbdcfa" /><stop offset="1" stopColor="#7d9ee2" /></linearGradient></defs>
          <path d="M6 25.500a6 6 0 0 1 0-11.500Q7 4 15 4q7 0 9 8a7 7 0 0 1 0 13.500z" fill="url(#cl)" />
        </svg>
        <div className="absolute -top-[6px] left-[14px] h-[20px] w-[20px] rounded-full bg-[#c42b1c] text-center text-[13px] leading-[20px] text-white">3</div>
      </div>
      <svg viewBox="0 0 29 29" className="mt-[15px] ml-[247px] h-[29px] w-[29px]">
        <defs><linearGradient id="win" x1="0" y1="0" x2="1" y2="1"><stop offset="0" stopColor="#4fd3fb" /><stop offset=".6" stopColor="#0f8ee2" /><stop offset="1" stopColor="#0273d0" /></linearGradient></defs>
        <path d="M1 0h13v14H0V1q0-1 1-1zM15 0h13q1 0 1 1v13H15zM0 15h14v14H1q-1 0-1-1zM15 15h14v13q0 1-1 1H15z" fill="url(#win)" />
      </svg>
      <div className="mt-[10px] ml-[18px] flex h-[39px] w-[273px] items-center rounded-full border border-[#dcdcdc] border-b-[#b9b9b9] bg-[#fafafa]">
        <svg viewBox="0 0 19 19" className="ml-[13px] h-[19px] w-[19px]" fill="none" stroke="#222" strokeWidth="2" strokeLinecap="round"><circle cx="8" cy="8" r="7" /><path d="M13 13l5 5" strokeWidth="2.400" /></svg>
        <div className="ml-[12px] text-[17.300px] tracking-[-0.250px] text-[#5c5c5c]">Wyszukaj</div>
      </div>
      <div className="ml-[3px] flex">
        {apps.map((a) => (
          <div key={a.name} className="relative flex w-[55.050px] justify-center">
            {a.name === "edge" && (
              <>
                <div className="absolute top-[4px] left-[9px] h-[49px] w-[43px] rounded-[5px] border border-[#e0e0e0] bg-[#f4f4f4]" />
                <div className="absolute top-[4px] left-[4px] h-[49px] w-[45px] rounded-[5px] border border-[#e2e2e2] bg-[#f9f9f9]" />
              </>
            )}
            <div className="relative mt-[14px] flex h-[30px] items-center">{a.icon}</div>
            {a.name === "outlook" && (
              <div className="absolute top-[7px] right-[6px] flex h-[20px] w-[20px] items-center justify-center rounded-full bg-[#5cc8fa]">
                <svg viewBox="0 0 12 11" className="h-[11px] w-[12px]" fill="none" stroke="#111" strokeWidth="1.200"><rect x=".6" y=".6" width="10.800" height="9.500" rx="1.500" /><path d="M.8 3L6 6l5.200-3" /></svg>
              </div>
            )}
            {a.open && <div className={`absolute top-[49px] h-[4px] rounded-full ${a.name === "edge" ? "w-[20px] bg-[#0078d4]" : "w-[8px] bg-[#8a8a8a]"}`} />}
          </div>
        ))}
      </div>
      <svg viewBox="0 0 14 9" className="mt-[25px] ml-auto h-[9px] w-[14px]" fill="none" stroke="#1a1a1a" strokeWidth="1.500"><path d="M.5 8L7 1.500 13.500 8" /></svg>
      <FaDropbox className="mt-[19px] ml-[22px] h-[20px] w-[20px] text-black" />
      <div className="mt-[19px] ml-[25px] w-[28px] text-[14.200px] leading-[21px]">POL</div>
      <svg viewBox="0 0 20 20" className="mt-[19px] ml-[22px] h-[20px] w-[20px]" fill="none" stroke="#1a1a1a" strokeWidth="1.300" strokeLinejoin="round"><path d="M1 5.500h2l2.500 3H8L6 1h2.500L13 8.300h4.500q2 .5 2 1.700t-2 1.700H13L8.500 19H6l2-7.500H5.500l-2.500 3H1L2 10z" /></svg>
      <svg viewBox="0 0 20 20" className="mt-[19px] ml-[9px] h-[20px] w-[20px]" fill="none" stroke="#1a1a1a" strokeWidth="1.300" strokeLinejoin="round"><path d="M1 7h3l4.500-4v14L4 13H1zM11 7.500q2 2.500 0 5" /><path d="M13.500 5q3.500 5 0 10M16 3q5 7 0 14" stroke="#b4b4b4" /></svg>
      <svg viewBox="0 0 20 20" className="mt-[18px] ml-[10px] h-[20px] w-[20px]"><rect x="1.500" y="5.500" width="15.500" height="11" rx="2.500" fill="none" stroke="#1a1a1a" strokeWidth="1.300" /><rect x="3.500" y="7.500" width="11.500" height="7" rx="1" fill="#1a1a1a" /><rect x="17.700" y="8.500" width="2" height="5" rx="1" fill="#1a1a1a" /><path d="M4.500.5L0 7.500h3L2 12l5.500-6.500h-3L6 .5z" fill="#1a1a1a" stroke="#eee" strokeWidth=".8" /></svg>
      <div className="mt-[13px] mr-[24.500px] ml-[20px] w-[73px] text-right text-[14.100px] leading-[20px]">
        <div>09:13</div>
        <div>04.01.2025</div>
      </div>
    </div>
  );
}

export default function App() {
  return (
    <div className="flex h-[1080px] w-[1920px] flex-col overflow-hidden bg-[#56575c] font-['Open_Sans','Noto_Sans',sans-serif]">
      <TabStrip />
      <Toolbar />
      <div className="relative mx-[5px] mb-[4px] flex h-[923px] shrink-0 flex-col overflow-hidden rounded-[11px] bg-[#5f93c8]">
        <Header />
        <div className="flex h-[823px]">
          <Sidebar />
          <div className="flex flex-1 flex-col pt-[45px] pl-[80px]">
            <div className="flex h-[24px] items-center text-[17.500px] font-bold text-[#0052a5]">
              <svg viewBox="0 0 20 20" className="mr-[11.500px] h-[20px] w-[20px]" fill="none" stroke="currentColor" strokeWidth="1.900" strokeLinecap="round" strokeLinejoin="round"><path d="M19 10H1.500M10 1L1 10l9 9" /></svg>
              <span className="-mt-[2px]">Twoje skrzynki</span>
            </div>
            <div className="mt-[29px] flex h-[725px] gap-[37px]">
              <MailboxCard />
              <Messages />
            </div>
          </div>
        </div>
        <Dialog />
      </div>
      <Taskbar />
    </div>
  );
}
